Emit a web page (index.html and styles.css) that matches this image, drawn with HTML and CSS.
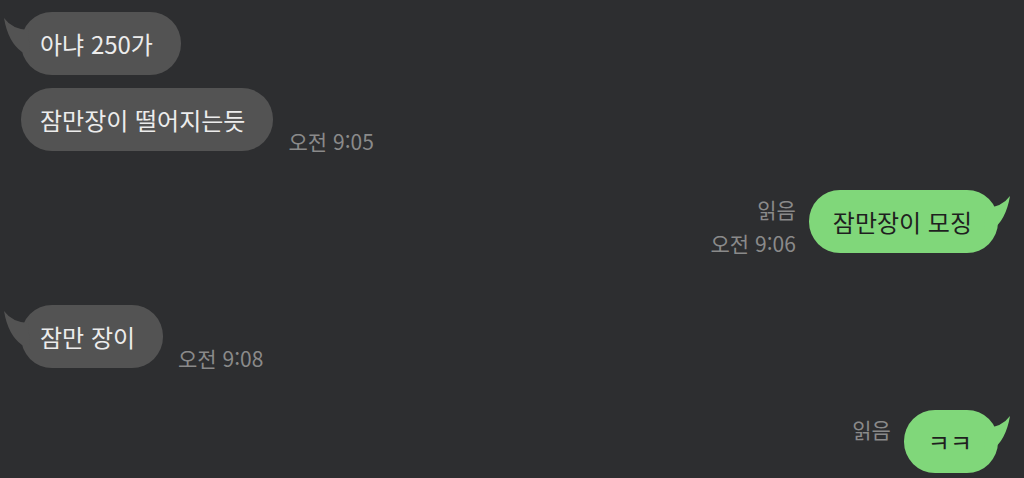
FILE: index.html
```html
<!DOCTYPE html>
<html lang="ko">
<head>
<meta charset="utf-8">
<title>채팅</title>
<link rel="stylesheet" href="styles.css">
</head>
<body>
<main class="chat">
  <div class="row in first">
    <div class="bubble gray tailed">
      <svg class="tail" viewBox="0 0 30 40" width="30" height="40"><path d="M4 6 Q12 17 28 18 L30 40 L22 40 Q8 30 4 6 Z"/></svg>
      <span class="msg">아냐 250가</span>
    </div>
  </div>
  <div class="row in cont">
    <div class="bubble gray"><span class="msg">잠만장이 떨어지는듯</span></div>
    <div class="meta"><span class="time">오전 9:05</span></div>
  </div>
  <div class="row out gap-a">
    <div class="meta right"><span class="read">읽음</span><span class="time">오전 9:06</span></div>
    <div class="bubble green tailed">
      <svg class="tail" viewBox="0 0 30 40" width="30" height="40"><path d="M26 6 Q18 17 2 18 L0 40 L8 40 Q22 30 26 6 Z"/></svg>
      <span class="msg">잠만장이 모징</span>
    </div>
  </div>
  <div class="row in gap-b">
    <div class="bubble gray tailed">
      <svg class="tail" viewBox="0 0 30 40" width="30" height="40"><path d="M4 6 Q12 17 28 18 L30 40 L22 40 Q8 30 4 6 Z"/></svg>
      <span class="msg">잠만 장이</span>
    </div>
    <div class="meta"><span class="time">오전 9:08</span></div>
  </div>
  <div class="row out gap-c">
    <div class="meta right"><span class="read">읽음</span></div>
    <div class="bubble green tailed">
      <svg class="tail" viewBox="0 0 30 40" width="30" height="40"><path d="M26 6 Q18 17 2 18 L0 40 L8 40 Q22 30 26 6 Z"/></svg>
      <span class="msg">ㅋㅋ</span>
    </div>
  </div>
</main>
</body>
</html>
```

FILE: styles.css
```css
html, body {
  margin: 0;
  padding: 0;
  background: #2d2e30;
  height: 100%;
  overflow: hidden;
}

.chat {
  font-family: "Noto Sans CJK KR", "Noto Sans", sans-serif;
  display: flex;
  flex-direction: column;
  padding: 12px 26px 0 21px;
}

.row {
  display: flex;
  align-items: stretch;
}

.row.out {
  justify-content: flex-end;
}

.row.cont { margin-top: 13px; }
.row.gap-a { margin-top: 39px; }
.row.gap-b { margin-top: 52px; }
.row.gap-c { margin-top: 42px; }

.bubble {
  position: relative;
  height: 63px;
  line-height: 63px;
  border-radius: 31px;
  font-size: 24px;
  white-space: nowrap;
}

.bubble.gray {
  background: #535353;
  color: #ececec;
  padding: 0 28px 0 19px;
}

.bubble.green {
  background: #80d77a;
  color: #1f1f1f;
  padding: 0 26px 0 24px;
}

.msg {
  position: relative;
}

.tail {
  position: absolute;
  top: 0;
}

.gray .tail {
  left: -21px;
  fill: #535353;
}

.green .tail {
  right: -16px;
  fill: #80d77a;
}

.meta {
  display: flex;
  flex-direction: column;
  font-size: 21px;
  line-height: 24px;
  color: #8a8a8a;
  margin-left: 15px;
  padding: 7px 0 0;
  white-space: nowrap;
}

.meta.right {
  align-items: flex-end;
  margin: 0 13px 0 0;
}

.meta .time {
  margin-top: auto;
  margin-bottom: -2px;
}
```
